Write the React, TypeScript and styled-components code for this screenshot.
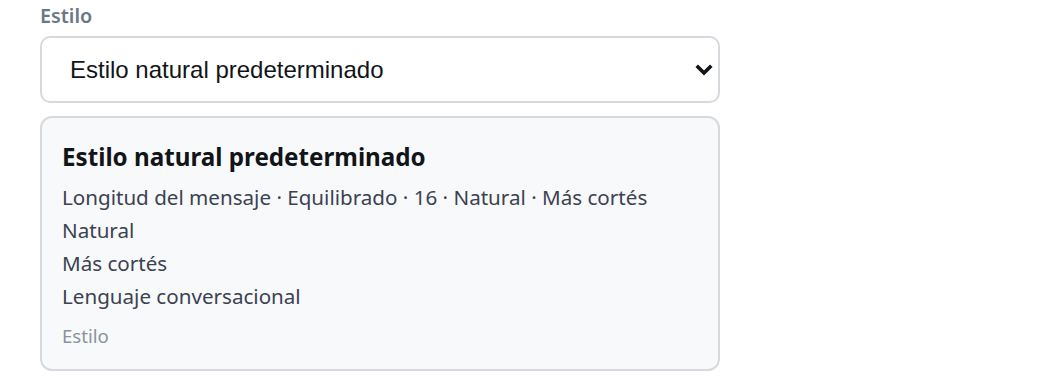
import React from "react";
import styled, { createGlobalStyle } from "styled-components";

const GlobalStyle = createGlobalStyle`
  body {
    margin: 0;
    background: #ffffff;
    font-family: "Noto Sans", "Open Sans", sans-serif;
  }
`;

const Page = styled.div`
  padding: 4px 0 0 40px;
  width: 680px;
`;

const FieldLabel = styled.label`
  display: block;
  font-size: 19.8px;
  font-weight: 600;
  color: #6b7785;
  line-height: 24px;
  margin-bottom: 8px;
`;

const SelectWrap = styled.div`
  position: relative;
  margin-bottom: 13px;
`;

const Select = styled.select`
  appearance: none;
  width: 100%;
  height: 67px;
  box-sizing: border-box;
  border: 2px solid #d6d9de;
  border-radius: 10px;
  background: #ffffff;
  padding: 0 48px 0 28px;
  font-family: "Liberation Sans", Arial, sans-serif;
  font-size: 24px;
  color: #111418;
  outline: none;
`;

const Chevron = styled.svg`
  position: absolute;
  right: 7px;
  top: 50%;
  transform: translateY(-50%);
  pointer-events: none;
`;

const Card = styled.div`
  box-sizing: border-box;
  border: 2px solid #d6d9de;
  border-radius: 12px;
  background: #f8f9fb;
  padding: 23px 20px 20px;
  height: 255px;
`;

const Title = styled.div`
  font-size: 24.2px;
  font-weight: 700;
  color: #111418;
  line-height: 32px;
  margin-bottom: 8px;
`;

const Line = styled.div`
  font-size: 20.6px;
  color: #3b4250;
  line-height: 33px;
`;

const Footnote = styled.div`
  font-size: 18.6px;
  color: #8a939e;
  line-height: 24px;
  margin-top: 11px;
`;

export default function App() {
  return (
    <>
      <GlobalStyle />
      <Page>
        <FieldLabel htmlFor="estilo">Estilo</FieldLabel>
        <SelectWrap>
          <Select id="estilo" defaultValue="natural">
            <option value="natural">Estilo natural predeterminado</option>
          </Select>
          <Chevron width="18" height="12" viewBox="0 0 18 12">
            <path
              d="M3 3 L9 9 L15 3"
              fill="none"
              stroke="#111418"
              strokeWidth="3.6"
              strokeLinecap="square"
            />
          </Chevron>
        </SelectWrap>
        <Card>
          <Title>Estilo natural predeterminado</Title>
          <Line>Longitud del mensaje · Equilibrado · 16 · Natural · Más cortés</Line>
          <Line>Natural</Line>
          <Line>Más cortés</Line>
          <Line>Lenguaje conversacional</Line>
          <Footnote>Estilo</Footnote>
        </Card>
      </Page>
    </>
  );
}
